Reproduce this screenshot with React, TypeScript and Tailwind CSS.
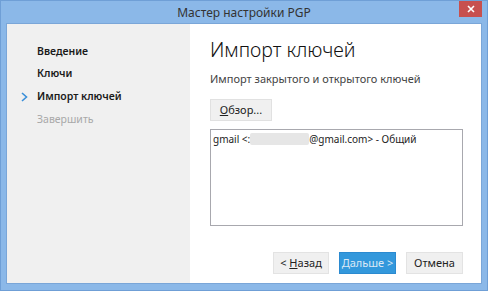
import React from "react";

const font = { fontFamily: '"Noto Sans", "Open Sans", sans-serif' };

export default function App() {
  return (
    <div
      className="w-[488px] h-[291px] bg-[#8bb8e8] flex flex-col border border-[#6f9fd6] overflow-hidden"
      style={font}
    >
      <div className="h-[22px] relative flex items-center justify-center shrink-0">
        <span className="text-[12px] text-[#333] leading-none mt-[1px]">Мастер настройки PGP</span>
        <div className="absolute right-[5px] top-0 w-[23px] h-[16px] bg-[#c7504f] flex items-center justify-center">
          <svg width="8" height="8" viewBox="0 0 8 8">
            <path d="M1 1L7 7M7 1L1 7" stroke="white" strokeWidth="1.6" />
          </svg>
        </div>
      </div>
      <div className="flex-1 mx-[5px] mb-[6px] flex border border-[#7aa6d8]">
        <div className="w-[183px] bg-[#f0f0f0] flex flex-col pt-[16px] text-[10.5px] font-semibold">
          <div className="h-[23px] flex items-center pl-[30px] text-[#1a1a1a]">Введение</div>
          <div className="h-[22px] flex items-center pl-[30px] text-[#1a1a1a]">Ключи</div>
          <div className="h-[23px] flex items-center text-[#1a1a1a]">
            <span className="w-[30px] flex justify-center pl-[4px]">
              <svg width="7" height="10" viewBox="0 0 7 10">
                <path d="M1 1L5.5 5L1 9" fill="none" stroke="#3a8fd9" strokeWidth="1.6" />
              </svg>
            </span>
            Импорт ключей
          </div>
          <div className="h-[23px] flex items-center pl-[30px] text-[#a8a8a8] font-normal">Завершить</div>
        </div>
        <div className="flex-1 bg-white flex flex-col pl-[20px] pr-[18px]">
          <div className="text-[19.5px] font-light text-[#111] leading-[26px] mt-[13px]">Импорт ключей</div>
          <div className="text-[11px] text-[#444] mt-[9px] leading-[14px]">Импорт закрытого и открытого ключей</div>
          <button className="mt-[13px] w-[62px] h-[22px] bg-[#f0f0f0] border border-[#e1e1e1] text-[11px] text-[#222] flex items-center justify-center">
            <span><span className="underline">О</span>бзор...</span>
          </button>
          <div className="mt-[8px] w-[253px] h-[97px] border border-[#a8a8ae] px-[2px] pt-[1px]">
            <div className="text-[10px] text-[#222] leading-[16px] flex items-center whitespace-nowrap">
              <span>gmail &lt;:</span>
              <span className="inline-block w-[59px] h-[12px] bg-[#e6e6e6] rounded-[2px]" />
              <span>@gmail.com&gt; - Общий</span>
            </div>
          </div>
          <div className="flex-1" />
          <div className="flex justify-end gap-[10px] mb-[9px] text-[11px]">
            <button className="w-[56px] h-[22px] bg-[#f0f0f0] border border-[#e3e3e3] text-[#222] flex items-center justify-center">
              <span>&lt; <span className="underline">Н</span>азад</span>
            </button>
            <button className="w-[57px] h-[22px] bg-[#3398dc] border border-[#2b8ad0] text-[#dbe9f6] flex items-center justify-center">
              <span><span className="underline">Д</span>альше &gt;</span>
            </button>
            <button className="w-[57px] h-[22px] bg-[#f0f0f0] border border-[#e3e3e3] text-[#222] flex items-center justify-center">
              Отмена
            </button>
          </div>
        </div>
      </div>
    </div>
  );
}
